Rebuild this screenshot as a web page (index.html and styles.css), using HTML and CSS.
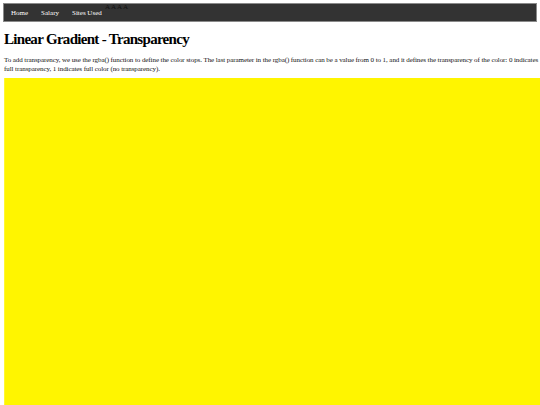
FILE: index.html
```html
<!DOCTYPE html>
<html>
<head>
<meta charset="utf-8">
<link rel="stylesheet" href="styles.css">
</head>
<body>
<div class="nav">
  <a class="nav-link">Home</a>
  <a class="nav-link">Salary</a>
  <a class="nav-link">Sites Used</a>
  <span class="sizes">A A A A</span>
</div>
<h1 class="title">Linear Gradient - Transparency</h1>
<p class="text">To add transparency, we use the rgba() function to define the color stops. The last parameter in the rgba() function can be a value from 0 to 1, and it defines the transparency of the color: 0 indicates full transparency, 1 indicates full color (no transparency).</p>
<div class="grad"></div>
</body>
</html>
```
FILE: styles.css
```css
html, body { margin: 0; padding: 0; }
body {
  font-family: "Liberation Serif", "Times New Roman", serif;
  padding: 3px 0 0 4px;
  overflow: hidden;
  height: 405px;
  box-sizing: border-box;
}
.nav {
  margin-left: -1px;
  width: 534px;
  height: 19px;
  background: #333;
  border: 1px solid #8a8a8a;
  box-sizing: border-box;
  display: flex;
  align-items: flex-start;
  position: relative;
  padding-left: 0.5px;
}
.nav-link {
  color: #fff;
  font-size: 7px;
  line-height: 8px;
  padding: 5px 6.5px 0 6.5px;
}
.sizes {
  position: absolute;
  left: 101px;
  top: 0;
  font-size: 7px;
  line-height: 7px;
  color: #111;
}
.title {
  font-size: 15px;
  line-height: 19px;
  font-weight: bold;
  letter-spacing: -0.7px;
  margin: 8px 0 0 0;
  color: #000;
}
.text {
  font-size: 7px;
  line-height: 9px;
  letter-spacing: -0.08px;
  margin: 7px 0 0 0;
  color: #111;
}
.grad {
  margin-top: 4px;
  height: 400px;
  width: 540px;
  background: linear-gradient(to right, rgba(255,245,0,0.6), rgba(255,245,0,1) 1px);
}
```
